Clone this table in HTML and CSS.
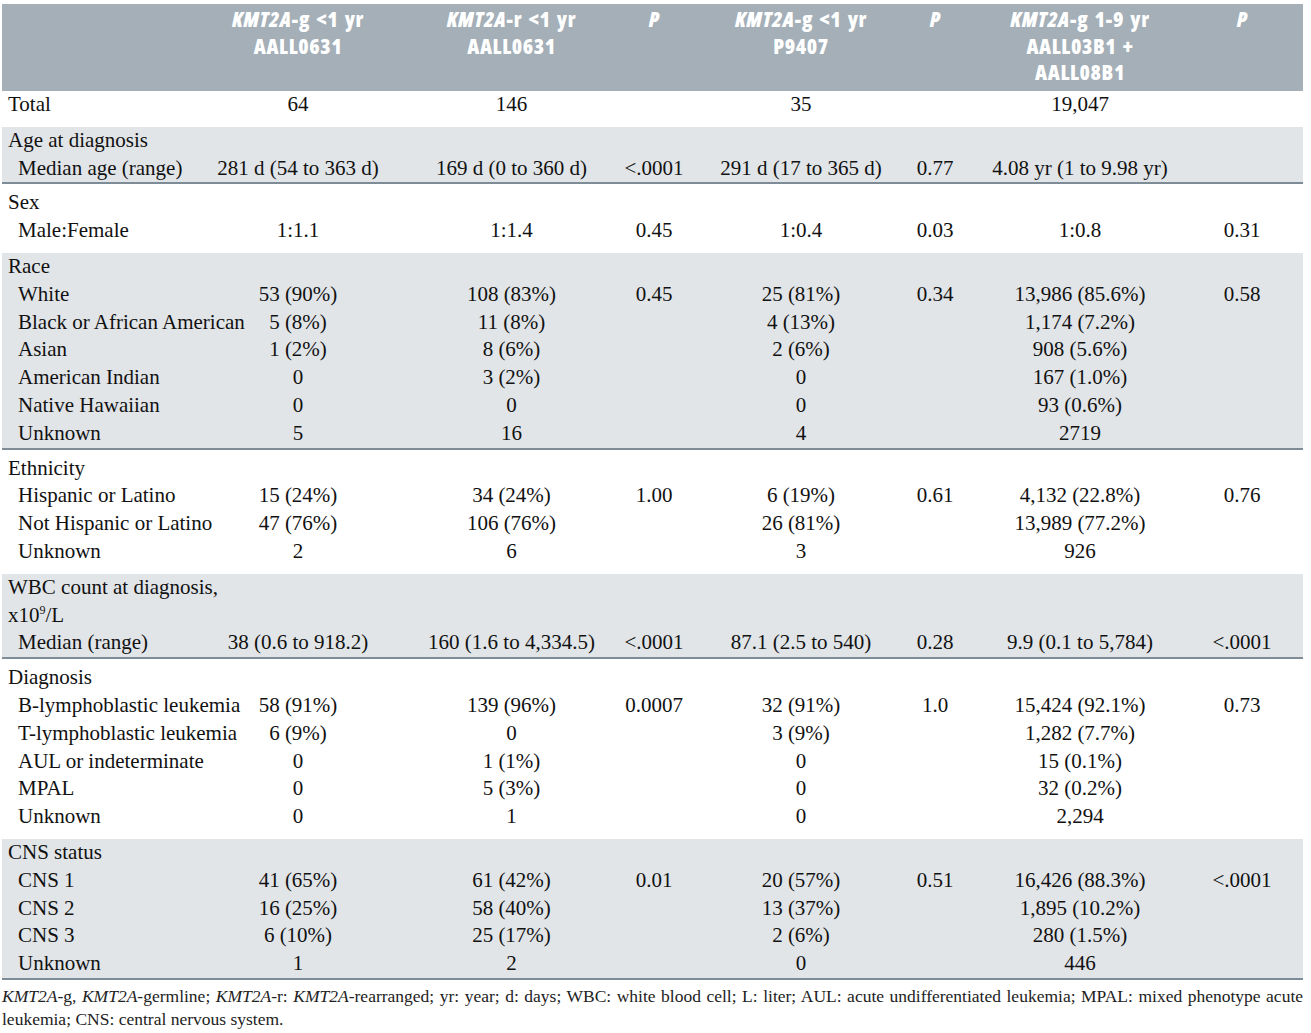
FILE: index.html
```html
<!DOCTYPE html>
<html lang="en">
<head>
<meta charset="utf-8">
<title>Patient characteristics</title>
<link rel="stylesheet" href="styles.css">
</head>
<body>
<div class="table">
  <div class="thead">
    <span class="th"></span>
    <span class="th"><i>KMT2A</i>-g &lt;1 yr<br>AALL0631</span>
    <span class="th"><i>KMT2A</i>-r &lt;1 yr<br>AALL0631</span>
    <span class="th"><i>P</i></span>
    <span class="th"><i>KMT2A</i>-g &lt;1 yr<br>P9407</span>
    <span class="th"><i>P</i></span>
    <span class="th"><i>KMT2A</i>-g 1-9 yr<br>AALL03B1 +<br>AALL08B1</span>
    <span class="th"><i>P</i></span>
  </div>

  <div class="group first">
    <div class="row"><span class="label">Total</span><span>64</span><span>146</span><span></span><span>35</span><span></span><span>19,047</span><span></span></div>
  </div>

  <div class="group shade">
    <div class="row"><span class="head">Age at diagnosis</span></div>
    <div class="row"><span class="label sub">Median age (range)</span><span>281 d (54 to 363 d)</span><span>169 d (0 to 360 d)</span><span>&lt;.0001</span><span>291 d (17 to 365 d)</span><span>0.77</span><span>4.08 yr (1 to 9.98 yr)</span><span></span></div>
  </div>

  <div class="group">
    <div class="row"><span class="head">Sex</span></div>
    <div class="row"><span class="label sub">Male:Female</span><span>1:1.1</span><span>1:1.4</span><span>0.45</span><span>1:0.4</span><span>0.03</span><span>1:0.8</span><span>0.31</span></div>
  </div>

  <div class="group shade">
    <div class="row"><span class="head">Race</span></div>
    <div class="row"><span class="label sub">White</span><span>53 (90%)</span><span>108 (83%)</span><span>0.45</span><span>25 (81%)</span><span>0.34</span><span>13,986 (85.6%)</span><span>0.58</span></div>
    <div class="row"><span class="label sub">Black or African American</span><span>5 (8%)</span><span>11 (8%)</span><span></span><span>4 (13%)</span><span></span><span>1,174 (7.2%)</span><span></span></div>
    <div class="row"><span class="label sub">Asian</span><span>1 (2%)</span><span>8 (6%)</span><span></span><span>2 (6%)</span><span></span><span>908 (5.6%)</span><span></span></div>
    <div class="row"><span class="label sub">American Indian</span><span>0</span><span>3 (2%)</span><span></span><span>0</span><span></span><span>167 (1.0%)</span><span></span></div>
    <div class="row"><span class="label sub">Native Hawaiian</span><span>0</span><span>0</span><span></span><span>0</span><span></span><span>93 (0.6%)</span><span></span></div>
    <div class="row"><span class="label sub">Unknown</span><span>5</span><span>16</span><span></span><span>4</span><span></span><span>2719</span><span></span></div>
  </div>

  <div class="group">
    <div class="row"><span class="head">Ethnicity</span></div>
    <div class="row"><span class="label sub">Hispanic or Latino</span><span>15 (24%)</span><span>34 (24%)</span><span>1.00</span><span>6 (19%)</span><span>0.61</span><span>4,132 (22.8%)</span><span>0.76</span></div>
    <div class="row"><span class="label sub">Not Hispanic or Latino</span><span>47 (76%)</span><span>106 (76%)</span><span></span><span>26 (81%)</span><span></span><span>13,989 (77.2%)</span><span></span></div>
    <div class="row"><span class="label sub">Unknown</span><span>2</span><span>6</span><span></span><span>3</span><span></span><span>926</span><span></span></div>
  </div>

  <div class="group shade">
    <div class="row"><span class="head">WBC count at diagnosis,<br>x10<sup>9</sup>/L</span></div>
    <div class="row"><span class="label sub">Median (range)</span><span>38 (0.6 to 918.2)</span><span>160 (1.6 to 4,334.5)</span><span>&lt;.0001</span><span>87.1 (2.5 to 540)</span><span>0.28</span><span>9.9 (0.1 to 5,784)</span><span>&lt;.0001</span></div>
  </div>

  <div class="group">
    <div class="row"><span class="head">Diagnosis</span></div>
    <div class="row"><span class="label sub">B-lymphoblastic leukemia</span><span>58 (91%)</span><span>139 (96%)</span><span>0.0007</span><span>32 (91%)</span><span>1.0</span><span>15,424 (92.1%)</span><span>0.73</span></div>
    <div class="row"><span class="label sub">T-lymphoblastic leukemia</span><span>6 (9%)</span><span>0</span><span></span><span>3 (9%)</span><span></span><span>1,282 (7.7%)</span><span></span></div>
    <div class="row"><span class="label sub">AUL or indeterminate</span><span>0</span><span>1 (1%)</span><span></span><span>0</span><span></span><span>15 (0.1%)</span><span></span></div>
    <div class="row"><span class="label sub">MPAL</span><span>0</span><span>5 (3%)</span><span></span><span>0</span><span></span><span>32 (0.2%)</span><span></span></div>
    <div class="row"><span class="label sub">Unknown</span><span>0</span><span>1</span><span></span><span>0</span><span></span><span>2,294</span><span></span></div>
  </div>

  <div class="group shade">
    <div class="row"><span class="head">CNS status</span></div>
    <div class="row"><span class="label sub">CNS 1</span><span>41 (65%)</span><span>61 (42%)</span><span>0.01</span><span>20 (57%)</span><span>0.51</span><span>16,426 (88.3%)</span><span>&lt;.0001</span></div>
    <div class="row"><span class="label sub">CNS 2</span><span>16 (25%)</span><span>58 (40%)</span><span></span><span>13 (37%)</span><span></span><span>1,895 (10.2%)</span><span></span></div>
    <div class="row"><span class="label sub">CNS 3</span><span>6 (10%)</span><span>25 (17%)</span><span></span><span>2 (6%)</span><span></span><span>280 (1.5%)</span><span></span></div>
    <div class="row"><span class="label sub">Unknown</span><span>1</span><span>2</span><span></span><span>0</span><span></span><span>446</span><span></span></div>
  </div>

  <p class="note">
    <span class="line1"><i>KMT2A</i>-g, <i>KMT2A</i>-germline; <i>KMT2A</i>-r: <i>KMT2A</i>-rearranged; yr: year; d: days; WBC: white blood cell; L: liter; AUL: acute undifferentiated leukemia; MPAL: mixed phenotype acute</span>
    <span class="line2">leukemia; CNS: central nervous system.</span>
  </p>
</div>
</body>
</html>
```

FILE: styles.css
```css
html, body {
  margin: 0;
  padding: 0;
  background: #ffffff;
}

body {
  color: #111111;
  font-family: "Liberation Serif", "Times New Roman", serif;
}

.table {
  width: 1301px;
  margin: 4px 0 0 2px;
}

.thead,
.row {
  display: grid;
  grid-template-columns: 189px 214px 213px 72px 222px 46px 244px 80px;
  padding-right: 21px;
}

.thead {
  box-sizing: border-box;
  height: 87px;
  padding-top: 2px;
  background: #a4afb8;
  color: #ffffff;
  font-family: "Open Sans", "DejaVu Sans Condensed", sans-serif;
  font-stretch: 75%;
  font-weight: 800;
  font-size: 21px;
  line-height: 26.5px;
  letter-spacing: 0.6px;
  word-spacing: 2px;
}

.th {
  text-align: center;
}

.row {
  font-size: 21px;
  line-height: 27.8px;
}

.row > span {
  justify-self: center;
  white-space: nowrap;
}

.row > .label,
.row > .head {
  justify-self: start;
  padding-left: 6px;
}

.row > .head {
  grid-column: 1 / -1;
}

.row > .label.sub {
  padding-left: 16px;
}

.row sup {
  font-size: 12px;
  line-height: 0;
  vertical-align: 8px;
}

.group {
  padding: 5px 0 8px;
}

.group.first {
  padding-top: 0;
}

.group.shade {
  padding: 0;
  background: #e1e5e8;
  border-bottom: 2px solid #7d8c97;
}

.note {
  margin: 5px 0 0;
  font-size: 17.5px;
  line-height: 23px;
  color: #222222;
}

.note .line1 {
  display: block;
  white-space: nowrap;
  text-align: justify;
  text-align-last: justify;
}

.note .line2 {
  display: block;
}
```
